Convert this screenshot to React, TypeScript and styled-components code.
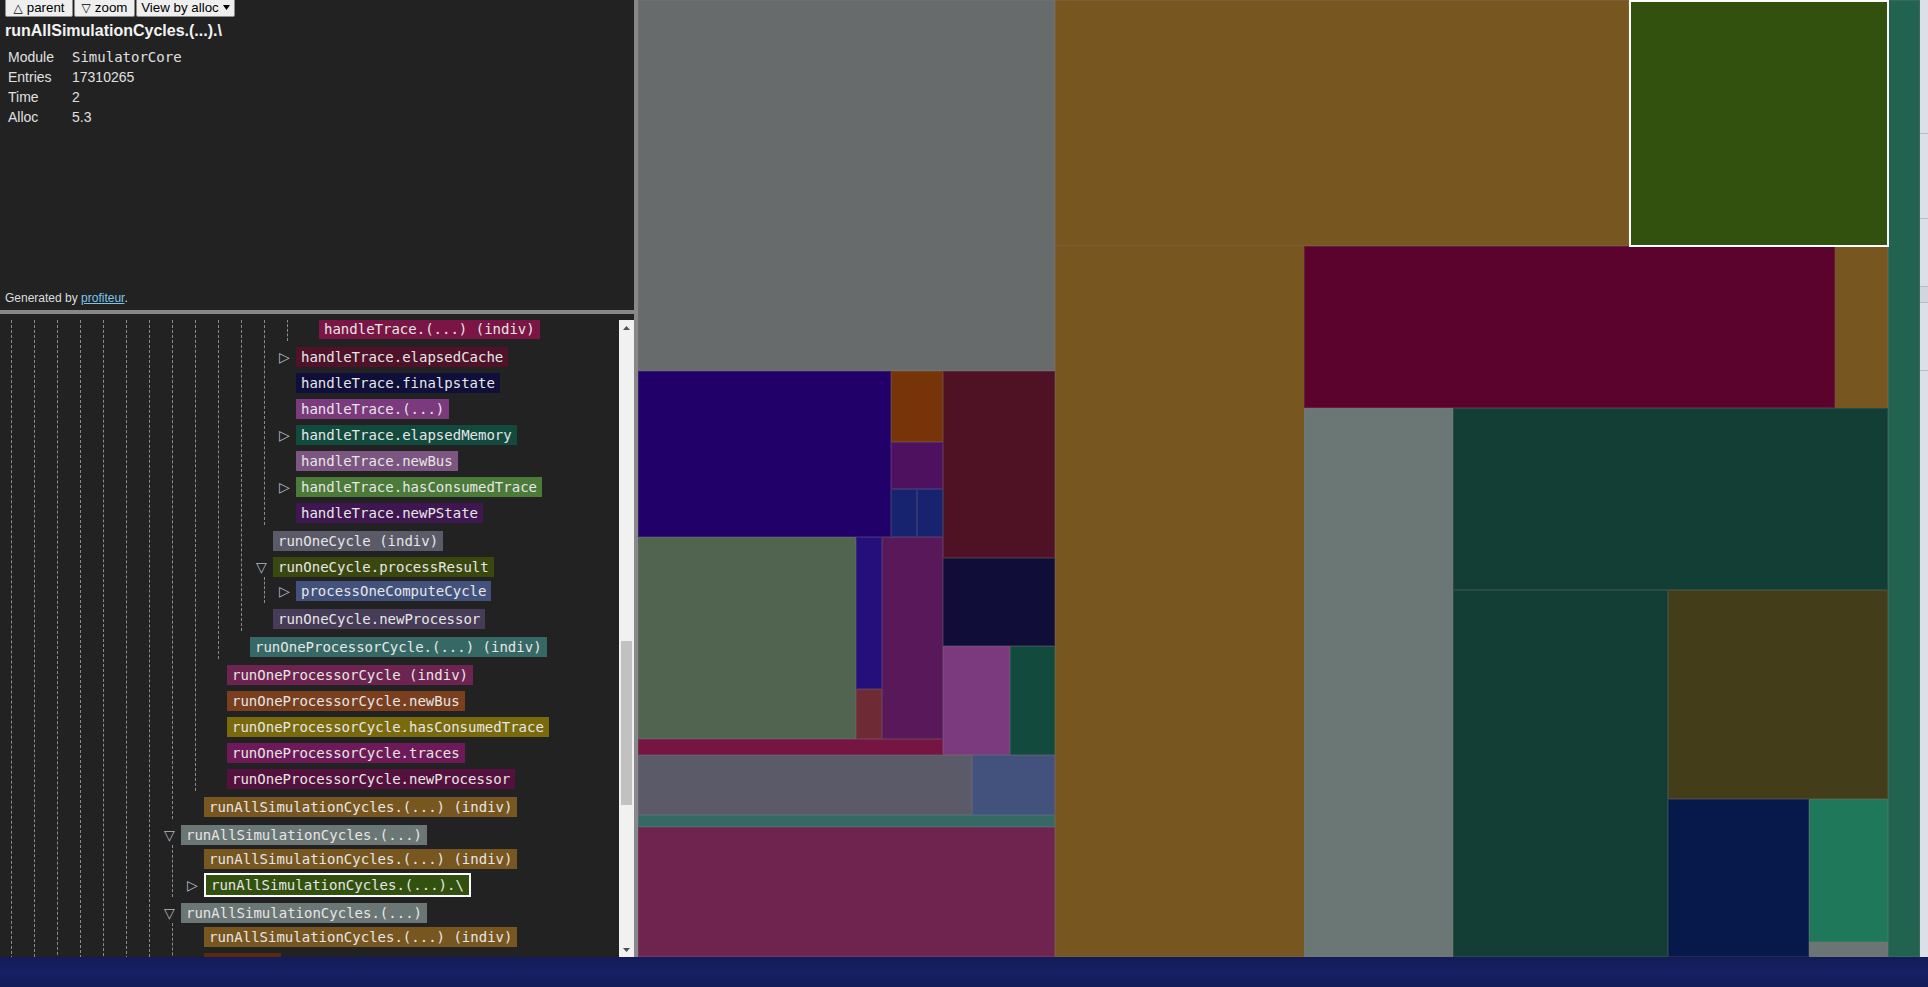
import React from "react";
import styled, { createGlobalStyle } from "styled-components";

const GlobalStyle = createGlobalStyle`
  html, body {
    margin: 0;
    padding: 0;
    background: #222222;
    overflow: hidden;
  }
  body {
    font-family: "Liberation Sans", Arial, sans-serif;
  }
  #root {
    width: 1928px;
    height: 987px;
  }
`;

const Screen = styled.div`
  display: flex;
  flex-direction: column;
  width: 1928px;
  height: 987px;
`;

const Workspace = styled.div`
  display: flex;
  height: 957px;
  flex: none;
`;

const Sidebar = styled.aside`
  width: 634px;
  flex: none;
  display: flex;
  flex-direction: column;
  background: #222222;
`;

const VDivider = styled.div`
  width: 4px;
  flex: none;
  background: #888888;
`;

const HDivider = styled.div`
  height: 4px;
  flex: none;
  background: #888888;
`;

const InfoPane = styled.section`
  height: 310px;
  flex: none;
  box-sizing: border-box;
  display: flex;
  flex-direction: column;
  padding: 0 5px 5px;
  color: #e0e0e0;
`;

const Toolbar = styled.div`
  display: flex;
  align-items: flex-end;
  gap: 1px;
  height: 17px;
  overflow: hidden;
  flex: none;
`;

const ToolButton = styled.button<{ $w: number }>`
  flex: none;
  width: ${(p) => p.$w}px;
  height: 19px;
  box-sizing: border-box;
  margin: 0;
  padding: 0;
  display: flex;
  align-items: center;
  justify-content: center;
  gap: 4px;
  font-family: "Liberation Sans", Arial, sans-serif;
  font-size: 13.33px;
  color: #000000;
  background: #efefef;
  border: 1px solid #8d8d8d;
  border-radius: 0 0 2px 2px;
`;

const Glyph = styled.span`
  font-family: "DejaVu Sans", sans-serif;
  font-size: 12px;
`;

const NodeTitle = styled.h1`
  margin: 4px 0 0;
  font-size: 16px;
  line-height: 20px;
  font-weight: bold;
  color: #f2f2f2;
  white-space: pre;
`;

const Details = styled.dl`
  display: grid;
  grid-template-columns: 64px auto;
  grid-auto-rows: 20px;
  margin: 6px 0 0 3px;
  font-size: 14px;
  line-height: 20px;
`;

const Term = styled.dt`
  margin: 0;
`;

const Value = styled.dd<{ $mono?: boolean }>`
  margin: 0;
  font-family: ${(p) =>
    p.$mono ? '"DejaVu Sans Mono", monospace' : '"Liberation Sans", Arial, sans-serif'};
`;

const Credit = styled.p`
  margin: auto 0 0;
  font-size: 12px;
  line-height: 14px;
  color: #dddddd;
`;

const CreditLink = styled.a`
  color: #7cc6ea;
  text-decoration: underline;
`;

const TreePane = styled.div`
  flex: 1;
  min-height: 0;
  display: flex;
  padding-top: 6px;
`;

const TreeViewport = styled.div`
  flex: 1;
  overflow: hidden;
`;

const TreeContent = styled.div`
  margin-top: -5px;
  padding-left: 2px;
`;

const Branch = styled.ul`
  list-style: none;
  margin: 0 0 0 9px;
  padding: 0 0 0 13px;
  border-left: 1px dashed #8c8c8c;
`;

const Node = styled.li<{ $cont?: boolean }>`
  padding: ${(p) => (p.$cont ? "0 0 2px" : "4px 0 2px")};
`;

const Row = styled.div`
  display: flex;
  align-items: center;
  height: 20px;
`;

const Toggle = styled.span`
  width: 18px;
  flex: none;
  box-sizing: border-box;
  padding-left: 1px;
  font-family: "DejaVu Sans", sans-serif;
  font-size: 14px;
  line-height: 20px;
  color: #b2b9c2;
`;

const Label = styled.span<{ $bg: string; $selected?: boolean }>`
  flex: none;
  padding: 0 5px;
  height: 20px;
  line-height: 20px;
  font-family: "DejaVu Sans Mono", monospace;
  font-size: 14px;
  white-space: pre;
  color: #e6e6e6;
  background: ${(p) => p.$bg};
  border: ${(p) => (p.$selected ? "2px solid #ffffff" : "none")};
`;

const Scrollbar = styled.div`
  width: 15px;
  flex: none;
  display: flex;
  flex-direction: column;
  background: #f1f1f1;
`;

const ScrollArrow = styled.div`
  height: 15px;
  flex: none;
  display: flex;
  align-items: center;
  justify-content: center;
`;

const ScrollTrack = styled.div`
  flex: 1;
  display: flex;
  flex-direction: column;
  align-items: center;
`;

const ScrollThumb = styled.div<{ $offset: number; $size: number }>`
  width: 11px;
  margin-top: ${(p) => p.$offset}px;
  height: ${(p) => p.$size}px;
  background: #c1c1c1;
`;

const Treemap = styled.main`
  flex: 1;
  position: relative;
  overflow: hidden;
  background: #222222;
`;

const Cell = styled.div<{ $selected?: boolean }>`
  position: absolute;
  box-sizing: border-box;
  border: ${(p) =>
    p.$selected ? "2px solid #ffffff" : "1px solid rgba(128, 128, 128, 0.22)"};
`;

const EdgeStrip = styled.div`
  width: 8px;
  flex: none;
  display: flex;
  flex-direction: column;
  background: #dcdfe7;
`;

const EdgeCell = styled.div<{ $h: number; $shade?: boolean }>`
  height: ${(p) => p.$h}px;
  flex: none;
  border-bottom: 1px solid #b9bdc6;
  background: ${(p) => (p.$shade ? "#d2d5de" : "transparent")};
`;

const Taskbar = styled.footer`
  height: 30px;
  flex: none;
  background: linear-gradient(180deg, #141b58 0%, #162063 50%, #141b5a 100%);
`;

type TreeNode = {
  name?: string;
  color?: string;
  toggle?: "open" | "closed";
  selected?: boolean;
  children?: TreeNode[];
};

const cont = (children: TreeNode[]): TreeNode => ({ children });
const item = (
  name: string,
  color: string,
  extra: Partial<TreeNode> = {}
): TreeNode => ({ name, color, ...extra });

const list12: TreeNode[] = [item("handleTrace.(...) (indiv)", "#7a1545")];

const list11: TreeNode[] = [
  cont(list12),
  item("handleTrace.elapsedCache", "#4f1228", { toggle: "closed" }),
  item("handleTrace.finalpstate", "#100e3a"),
  item("handleTrace.(...)", "#7b3a7e"),
  item("handleTrace.elapsedMemory", "#124b3e", { toggle: "closed" }),
  item("handleTrace.newBus", "#7d5581"),
  item("handleTrace.hasConsumedTrace", "#4b7a39", { toggle: "closed" }),
  item("handleTrace.newPState", "#3f1650"),
];

const list10: TreeNode[] = [
  cont(list11),
  item("runOneCycle (indiv)", "#5b5a68"),
  item("runOneCycle.processResult", "#3a4810", {
    toggle: "open",
    children: [item("processOneComputeCycle", "#43527d", { toggle: "closed" })],
  }),
  item("runOneCycle.newProcessor", "#463c58"),
];

const list9: TreeNode[] = [
  cont(list10),
  item("runOneProcessorCycle.(...) (indiv)", "#366966"),
];

const list8: TreeNode[] = [
  cont(list9),
  item("runOneProcessorCycle (indiv)", "#6e2450"),
  item("runOneProcessorCycle.newBus", "#793f1e"),
  item("runOneProcessorCycle.hasConsumedTrace", "#7a6a0e"),
  item("runOneProcessorCycle.traces", "#6f1a58"),
  item("runOneProcessorCycle.newProcessor", "#55113d"),
];

const list7: TreeNode[] = [
  cont(list8),
  item("runAllSimulationCycles.(...) (indiv)", "#785620"),
];

const list6: TreeNode[] = [
  cont(list7),
  item("runAllSimulationCycles.(...)", "#6b7775", {
    toggle: "open",
    children: [
      item("runAllSimulationCycles.(...) (indiv)", "#785620"),
      item("runAllSimulationCycles.(...).\\", "#32510f", {
        toggle: "closed",
        selected: true,
      }),
    ],
  }),
  item("runAllSimulationCycles.(...)", "#6b7775", {
    toggle: "open",
    children: [
      item("runAllSimulationCycles.(...) (indiv)", "#785620"),
      item("readData", "#5a2a0c"),
    ],
  }),
];

// the ancestors above the visible part of the tree are scrolled out
let rootList: TreeNode[] = list6;
for (let i = 0; i < 6; i++) rootList = [cont(rootList)];

type Rect = [number, number, number, number, string, boolean?];

const cells: Rect[] = [
  [0, 0, 417, 371, "#686b6c"],
  [0, 371, 253, 166, "#22006a"],
  [253, 371, 52, 71, "#763408"],
  [253, 442, 52, 47, "#4e1160"],
  [253, 489, 26, 48, "#17236e"],
  [279, 489, 26, 48, "#17236e"],
  [305, 371, 112, 187, "#4f1224"],
  [305, 558, 112, 88, "#100d38"],
  [305, 646, 67, 109, "#7b3a7e"],
  [372, 646, 45, 109, "#124b3e"],
  [0, 537, 218, 202, "#506450"],
  [218, 537, 26, 152, "#23107a"],
  [218, 689, 26, 50, "#6e2a35"],
  [244, 537, 61, 202, "#58185a"],
  [0, 739, 305, 16, "#771542"],
  [0, 755, 334, 60, "#5b5a68"],
  [334, 755, 83, 60, "#43527d"],
  [0, 815, 417, 12, "#366966"],
  [0, 827, 417, 130, "#6f2450"],
  [417, 0, 833, 957, "#78561f"],
  [417, 0, 574, 246, "#78561f"],
  [666, 246, 531, 162, "#5c032d"],
  [666, 408, 149, 549, "#6b7775"],
  [815, 408, 435, 182, "#123e35"],
  [815, 590, 215, 367, "#123e35"],
  [1030, 590, 220, 209, "#433d19"],
  [1030, 799, 141, 158, "#07184b"],
  [1171, 799, 79, 143, "#20785b"],
  [1171, 942, 79, 15, "#6b7573"],
  [1250, 0, 32, 957, "#21634e"],
  [991, 0, 260, 247, "#32510f", true],
];

const edgeCells = [
  { h: 133 },
  { h: 84 },
  { h: 67 },
  { h: 15, shade: true },
  { h: 67 },
];

function TreeList({ nodes }: { nodes: TreeNode[] }) {
  return (
    <Branch>
      {nodes.map((n, i) => (
        <TreeItem key={i} node={n} />
      ))}
    </Branch>
  );
}

function TreeItem({ node }: { node: TreeNode }) {
  if (!node.name) {
    return (
      <Node $cont>{node.children && <TreeList nodes={node.children} />}</Node>
    );
  }
  return (
    <Node>
      <Row>
        <Toggle>
          {node.toggle === "open" ? "▽" : node.toggle === "closed" ? "▷" : ""}
        </Toggle>
        <Label $bg={node.color || "#444"} $selected={node.selected}>
          {node.name}
        </Label>
      </Row>
      {node.children && <TreeList nodes={node.children} />}
    </Node>
  );
}

function ArrowIcon({ up }: { up?: boolean }) {
  return (
    <svg width="7" height="4" viewBox="0 0 7 4">
      <polygon
        points={up ? "3.5,0 7,4 0,4" : "0,0 7,0 3.5,4"}
        fill="#505050"
      />
    </svg>
  );
}

export default function App() {
  return (
    <>
      <GlobalStyle />
      <Screen>
        <Workspace>
          <Sidebar>
            <InfoPane>
              <Toolbar>
                <ToolButton $w={68}>
                  <Glyph>△</Glyph>parent
                </ToolButton>
                <ToolButton $w={61}>
                  <Glyph>▽</Glyph>zoom
                </ToolButton>
                <ToolButton $w={99}>
                  View by alloc
                  <svg width="7" height="5" viewBox="0 0 7 5">
                    <polygon points="0,0 7,0 3.5,5" fill="#000" />
                  </svg>
                </ToolButton>
              </Toolbar>
              <NodeTitle>runAllSimulationCycles.(...).\</NodeTitle>
              <Details>
                <Term>Module</Term>
                <Value $mono>SimulatorCore</Value>
                <Term>Entries</Term>
                <Value>17310265</Value>
                <Term>Time</Term>
                <Value>2</Value>
                <Term>Alloc</Term>
                <Value>5.3</Value>
              </Details>
              <Credit>
                Generated by <CreditLink href="#">profiteur</CreditLink>.
              </Credit>
            </InfoPane>
            <HDivider />
            <TreePane>
              <TreeViewport>
                <TreeContent>
                  <TreeList nodes={rootList} />
                </TreeContent>
              </TreeViewport>
              <Scrollbar>
                <ScrollArrow>
                  <ArrowIcon up />
                </ScrollArrow>
                <ScrollTrack>
                  <ScrollThumb $offset={306} $size={164} />
                </ScrollTrack>
                <ScrollArrow>
                  <ArrowIcon />
                </ScrollArrow>
              </Scrollbar>
            </TreePane>
          </Sidebar>
          <VDivider />
          <Treemap>
            {cells.map(([x, y, w, h, bg, sel], i) => (
              <Cell
                key={i}
                $selected={sel}
                style={{ left: x, top: y, width: w, height: h, background: bg }}
              />
            ))}
          </Treemap>
          <EdgeStrip>
            {edgeCells.map((c, i) => (
              <EdgeCell key={i} $h={c.h} $shade={c.shade} />
            ))}
          </EdgeStrip>
        </Workspace>
        <Taskbar />
      </Screen>
    </>
  );
}
